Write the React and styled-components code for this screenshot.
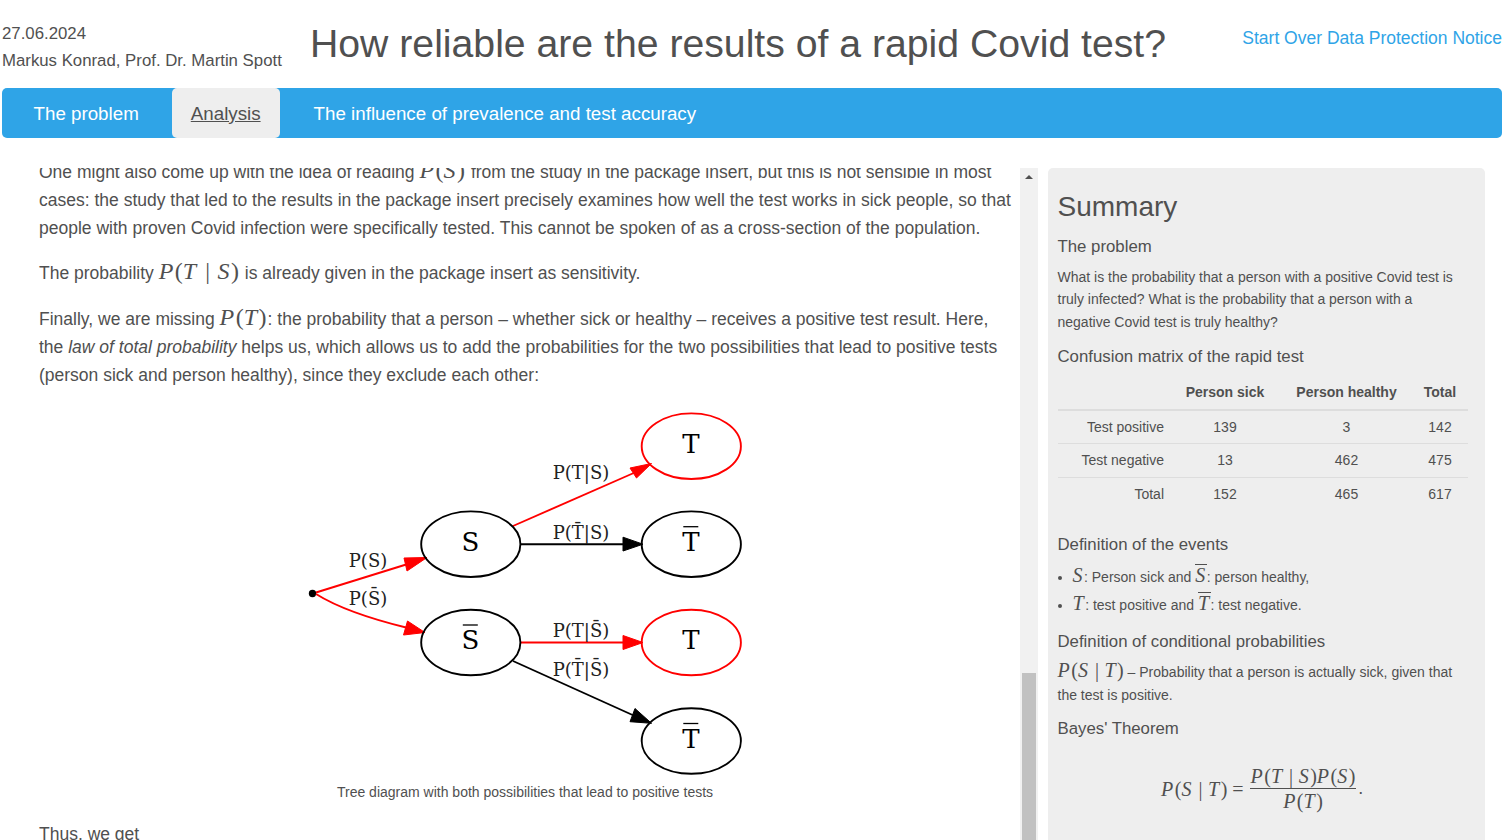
import React from 'react'
import styled, { createGlobalStyle } from 'styled-components'

const GlobalStyle = createGlobalStyle`
  html, body {
    margin: 0;
    padding: 0;
    background: #fff;
    overflow: hidden;
  }
  body {
    font-family: "Liberation Sans", Arial, sans-serif;
    font-size: 17.5px;
    line-height: 1.6;
    color: #505050;
  }
  * { box-sizing: border-box; }
`

const Page = styled.div`
  height: 840px;
  padding: 0 3px 0 2px;
  overflow: hidden;
  display: flex;
  flex-direction: column;
`
const Header = styled.header`
  height: 88px;
  display: flex;
  justify-content: space-between;
  flex-shrink: 0;
`
const Meta = styled.div`
  width: 308px;
  padding-top: 20px;
  font-size: 16.8px;
  line-height: 27px;
`
const Title = styled.h1`
  flex: 1;
  margin: 17px 0 0;
  font-size: 39.2px;
  font-weight: 400;
  line-height: 54px;
`
const HeaderLinks = styled.div`
  padding-top: 24px;
  font-size: 17.5px;
  line-height: 28px;
`
const TopLink = styled.a`
  color: #2fa4e7;
  text-decoration: none;
`
const NavBar = styled.nav`
  height: 50px;
  flex-shrink: 0;
  display: flex;
  background: #2fa4e7;
  border-radius: 5px;
`
const NavItem = styled.a`
  padding: 0 33px 0 ${p => p.$left || '31.5px'};
  line-height: 52px;
  font-size: 18.75px;
  color: #fff;
  text-decoration: none;
`
const ActiveNavItem = styled(NavItem)`
  padding: 0 19px;
  color: #505050;
  background: #eee;
  text-decoration: underline;
  border-radius: 5px;
`
const Main = styled.main`
  flex: 1;
  min-height: 0;
  margin-top: 30px;
  display: flex;
`
const Article = styled.article`
  width: 1018px;
  flex-shrink: 0;
  height: 100%;
  padding: 0 9px 0 37px;
  overflow: hidden;
`
const Para = styled.p`
  margin: 0 0 17.5px;
  line-height: 28px;
  &:first-child { margin-top: -10.2px; }
`
const Figure = styled.figure`
  margin: 19px 0 17px;
  text-align: center;
`
const Graph = styled.svg`
  display: block;
  margin: 0 auto;
`
const Caption = styled.figcaption`
  font-size: 14px;
  line-height: 22px;
  margin-top: 1px;
`
const ScrollTrack = styled.div`
  width: 18px;
  flex-shrink: 0;
  background: #f1f1f1;
  display: flex;
  flex-direction: column;
  align-items: center;
  justify-content: space-between;
`
const ScrollArrow = styled.div`
  margin-top: 7px;
  width: 0;
  height: 0;
  border-left: 4px solid transparent;
  border-right: 4px solid transparent;
  border-bottom: 4px solid #505050;
`
const ScrollThumb = styled.div`
  width: 14px;
  height: 167px;
  background: #c1c1c1;
`
const Sidebar = styled.aside`
  width: 437px;
  margin-left: 10px;
  flex-shrink: 0;
  height: 100%;
  padding: 19px 18px 0 9.5px;
  background: #eee;
  border-radius: 5px 5px 0 0;
  overflow: hidden;
  font-size: 14px;
  line-height: 22.4px;
`
const SideTitle = styled.h2`
  margin: 0 0 8px;
  font-size: 28px;
  font-weight: 400;
  line-height: 40px;
`
const SideHeading = styled.h3`
  margin: 0 0 7px;
  font-size: 16.8px;
  font-weight: 400;
  line-height: 24px;
`
const SidePara = styled.p`
  margin: 0 0 ${p => p.$gap || '12px'};
`
const MatrixTable = styled.table`
  width: 409.5px;
  table-layout: fixed;
  border-collapse: collapse;
  margin: 7px 0 22.5px;
`
const HeadCell = styled.th`
  height: 34px;
  padding: 0 0 2px;
  font-weight: 700;
  text-align: center;
  border-bottom: 2px solid #ddd;
`
const RowLabel = styled.td`
  height: 33.5px;
  padding: 0 5.5px 0 0;
  text-align: right;
  border-top: 1px solid #ddd;
`
const Cell = styled.td`
  height: 33.5px;
  padding: 0;
  text-align: center;
  border-top: 1px solid #ddd;
`
const EventList = styled.ul`
  margin: -1px 0 11px;
  padding: 0 0 0 15px;
`
const EventItem = styled.li`
  line-height: 28px;
`
const MathText = styled.span`
  font-family: "Liberation Serif", "Times New Roman", serif;
  font-size: ${p => p.$size || '24px'};
  margin-right: ${p => (p.$size ? '0' : '1px')};
  line-height: 0;
  white-space: nowrap;
`
const MathVar = styled.i`
  font-style: italic;
  padding-right: 1.5px;
`
const Bar = styled.span`
  display: inline-block;
  line-height: 1;
  border-top: 1px solid #505050;
`
const Given = styled.span`
  padding: 0 ${p => p.$pad || '7.5px'};
  font-style: normal;
`
const Equation = styled.div`
  margin-top: 23px;
  display: flex;
  justify-content: center;
  align-items: center;
  gap: 6px;
`
const Fraction = styled.span`
  display: inline-flex;
  flex-direction: column;
  align-items: center;
  line-height: 24px;
`
const FracTop = styled.span`
  padding: 0 1px;
  border-bottom: 1px solid #505050;
`
const EquationEnd = styled.span`
  margin-left: -4px;
  font-size: 18px;
`

const Prob = ({ a, b, size }) => (
  <MathText $size={size}>
    <MathVar>P</MathVar>(<MathVar>{a}</MathVar>
    {b && <Given $pad={size ? '5.5px' : undefined}>|</Given>}
    {b && <MathVar>{b}</MathVar>})
  </MathText>
)

const Node = ({ cx, cy, label, red, bar }) => (
  <g>
    <ellipse cx={cx} cy={cy} rx="49.6" ry="32.8" fill="none" stroke={red ? '#f00' : '#000'} strokeWidth="1.9" />
    {bar && <line x1={cx - 8} x2={cx + 7} y1={cy - 17.5} y2={cy - 17.5} stroke="#000" strokeWidth="1.3" />}
    <text x={cx - 0.5} y={cy + 6.5} textAnchor="middle" fontFamily="DejaVu Serif, serif" fontSize="26" fill="#000">{label}</text>
  </g>
)

const Edge = ({ d, head, color }) => (
  <g>
    <path d={d} fill="none" stroke={color} strokeWidth="1.9" />
    <polygon points={head} fill={color} stroke={color} />
  </g>
)

const EdgeLabel = ({ x, y, children }) => (
  <text x={x} y={y} textAnchor="middle" fontFamily="DejaVu Serif, serif" fontSize="18" fill="#222">{children}</text>
)

const TreeDiagram = () => (
  <Graph width="470" height="372" viewBox="290 408 470 372">
    <circle cx="312.5" cy="593.5" r="3.7" fill="#000" />
    <Edge color="#f00" d="M316 592.5 L411 563" head="427,557.5 407,571 404,558" />
    <Edge color="#f00" d="M316 594 C340 609 375 620 408 628" head="425,632.5 403.5,635 407.5,621" />
    <Edge color="#f00" d="M513 526 L636 472" head="651.5,463.5 636.5,478 630,468" />
    <Edge color="#000" d="M520 544.2 L625 544.2" head="643,544.2 623,551 623,537.2" />
    <Edge color="#f00" d="M520 642.5 L625 642.5" head="643,642.5 623,649.5 623,635.5" />
    <Edge color="#000" d="M513 661 L637 717" head="651.5,723.3 630,721.7 635,708.5" />
    <Node cx={691.3} cy={446.2} label="T" red />
    <Node cx={691.3} cy={544.2} label="T" bar />
    <Node cx={470.8} cy={544.2} label="S" />
    <Node cx={470.8} cy={642.5} label="S" bar />
    <Node cx={691.3} cy={642.5} label="T" red />
    <Node cx={691.3} cy={741} label="T" bar />
    <EdgeLabel x={368} y={566.5}>P(S)</EdgeLabel>
    <EdgeLabel x={368} y={604.5}>{'P(S\u0304)'}</EdgeLabel>
    <EdgeLabel x={581} y={479}>P(T|S)</EdgeLabel>
    <EdgeLabel x={581} y={539}>{'P(T\u0304|S)'}</EdgeLabel>
    <EdgeLabel x={581} y={637}>{'P(T|S\u0304)'}</EdgeLabel>
    <EdgeLabel x={581} y={675.5}>{'P(T\u0304|S\u0304)'}</EdgeLabel>
  </Graph>
)

const rows = [
  ['Test positive', 139, 3, 142],
  ['Test negative', 13, 462, 475],
  ['Total', 152, 465, 617],
]

export default function App() {
  return (
    <>
      <GlobalStyle />
      <Page>
        <Header>
          <Meta>
            <div>27.06.2024</div>
            <div>Markus Konrad, Prof. Dr. Martin Spott</div>
          </Meta>
          <Title>How reliable are the results of a rapid Covid test?</Title>
          <HeaderLinks>
            <TopLink href="#">Start Over</TopLink> <TopLink href="#">Data Protection Notice</TopLink>
          </HeaderLinks>
        </Header>
        <NavBar>
          <NavItem href="#">The problem</NavItem>
          <ActiveNavItem href="#">Analysis</ActiveNavItem>
          <NavItem href="#" $left="34px">The influence of prevalence and test accuracy</NavItem>
        </NavBar>
        <Main>
          <Article>
            <Para>
              One might also come up with the idea of reading <Prob a="S" /> from the study in the package insert, but this is not sensible in most
              cases: the study that led to the results in the package insert precisely examines how well the test works in sick people, so that
              people with proven Covid infection were specifically tested. This cannot be spoken of as a cross-section of the population.
            </Para>
            <Para>
              The probability <Prob a="T" b="S" /> is already given in the package insert as sensitivity.
            </Para>
            <Para>
              Finally, we are missing <Prob a="T" />: the probability that a person – whether sick or healthy – receives a positive test result. Here,
              the <em>law of total probability</em> helps us, which allows us to add the probabilities for the two possibilities that lead to positive tests
              (person sick and person healthy), since they exclude each other:
            </Para>
            <Figure>
              <TreeDiagram />
              <Caption>Tree diagram with both possibilities that lead to positive tests</Caption>
            </Figure>
            <Para>Thus, we get</Para>
          </Article>
          <ScrollTrack>
            <ScrollArrow />
            <ScrollThumb />
          </ScrollTrack>
          <Sidebar>
            <SideTitle>Summary</SideTitle>
            <SideHeading>The problem</SideHeading>
            <SidePara>
              What is the probability that a person with a positive Covid test is truly infected? What is the probability that a person with a
              negative Covid test is truly healthy?
            </SidePara>
            <SideHeading>Confusion matrix of the rapid test</SideHeading>
            <MatrixTable>
              <colgroup>
                <col width="112" />
                <col width="111" />
                <col width="132" />
                <col width="55" />
              </colgroup>
              <thead>
                <tr>
                  <HeadCell />
                  <HeadCell>Person sick</HeadCell>
                  <HeadCell>Person healthy</HeadCell>
                  <HeadCell>Total</HeadCell>
                </tr>
              </thead>
              <tbody>
                {rows.map(r => (
                  <tr key={r[0]}>
                    <RowLabel>{r[0]}</RowLabel>
                    <Cell>{r[1]}</Cell>
                    <Cell>{r[2]}</Cell>
                    <Cell>{r[3]}</Cell>
                  </tr>
                ))}
              </tbody>
            </MatrixTable>
            <SideHeading>Definition of the events</SideHeading>
            <EventList>
              <EventItem>
                <MathText $size="20px"><MathVar>S</MathVar></MathText>: Person sick and <MathText $size="20px"><Bar><MathVar>S</MathVar></Bar></MathText>: person healthy,
              </EventItem>
              <EventItem>
                <MathText $size="20px"><MathVar>T</MathVar></MathText>: test positive and <MathText $size="20px"><Bar><MathVar>T</MathVar></Bar></MathText>: test negative.
              </EventItem>
            </EventList>
            <SideHeading>Definition of conditional probabilities</SideHeading>
            <SidePara $gap="11px">
              <Prob a="S" b="T" size="20px" /> – Probability that a person is actually sick, given that the test is positive.
            </SidePara>
            <SideHeading>Bayes' Theorem</SideHeading>
            <Equation>
              <MathText $size="20px"><Prob a="S" b="T" size="20px" /> =</MathText>
              <MathText $size="20px">
                <Fraction>
                  <FracTop><Prob a="T" b="S" size="20px" /><Prob a="S" size="20px" /></FracTop>
                  <span><Prob a="T" size="20px" /></span>
                </Fraction>
              </MathText>
              <EquationEnd>.</EquationEnd>
            </Equation>
          </Sidebar>
        </Main>
      </Page>
    </>
  )
}
